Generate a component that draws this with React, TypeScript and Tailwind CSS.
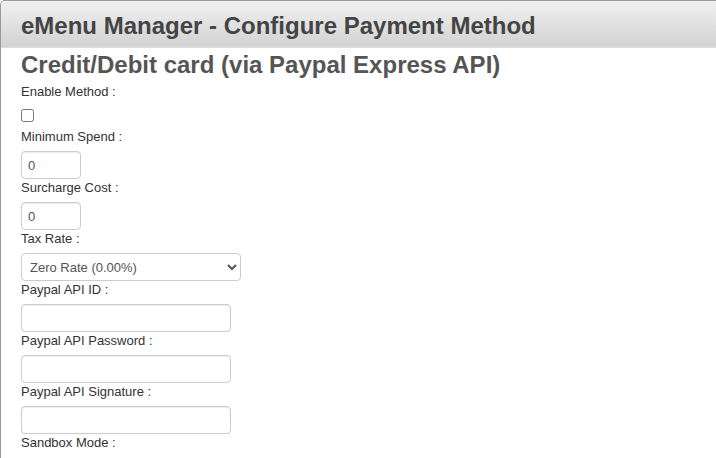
import React from "react";

const font = { fontFamily: '"Liberation Sans", Arial, sans-serif' };

function Label({ children }: { children: React.ReactNode }) {
  return (
    <label className="block text-[13px] leading-[18px] mb-[5px] text-[#333]">{children}</label>
  );
}

function TextInput({ w, value }: { w: string; value?: string }) {
  return (
    <input
      type="text"
      defaultValue={value}
      className={`${w} block h-[28px] rounded-[4px] border border-[#ccc] bg-white px-[6px] text-[13px] text-[#555] shadow-[inset_0_1px_1px_rgba(0,0,0,0.075)] outline-none`}
      style={font}
    />
  );
}

export default function App() {
  return (
    <div className="min-h-[458px] w-[716px] bg-white" style={font}>
      <div className="min-h-[458px] rounded-tl-[5px] border-l border-t border-[#999] bg-white">
        <div className="flex h-[47px] items-center rounded-tl-[4px] border-b border-[#ddd] bg-gradient-to-b from-[#f1f1f1] to-[#d2d2d2] pl-[20px] pt-[4px]">
          <h1 className="text-[24px] font-bold text-[#444]">eMenu Manager - Configure Payment Method</h1>
        </div>
        <div className="px-[20px]">
          <h2 className="mt-[3px] mb-[4px] text-[24px] font-bold leading-[28px] text-[#555]">Credit/Debit card (via Paypal Express API)</h2>
          <Label>Enable Method :</Label>
          <input type="checkbox" className="block m-0 mt-[8px] mb-[6px] h-[13px] w-[13px]" />
          <Label>Minimum Spend :</Label>
          <TextInput w="w-[60px]" value="0" />
          <Label>Surcharge Cost :</Label>
          <TextInput w="w-[60px]" value="0" />
          <Label>Tax Rate :</Label>
          <select
            className="block h-[28px] w-[220px] rounded-[4px] border border-[#ccc] bg-white px-[4px] text-[13px] text-[#555]"
            style={font}
            defaultValue="0"
          >
            <option value="0">Zero Rate (0.00%)</option>
          </select>
          <Label>Paypal API ID :</Label>
          <TextInput w="w-[210px]" />
          <Label>Paypal API Password :</Label>
          <TextInput w="w-[210px]" />
          <Label>Paypal API Signature :</Label>
          <TextInput w="w-[210px]" />
          <Label>Sandbox Mode :</Label>
        </div>
      </div>
    </div>
  );
}
